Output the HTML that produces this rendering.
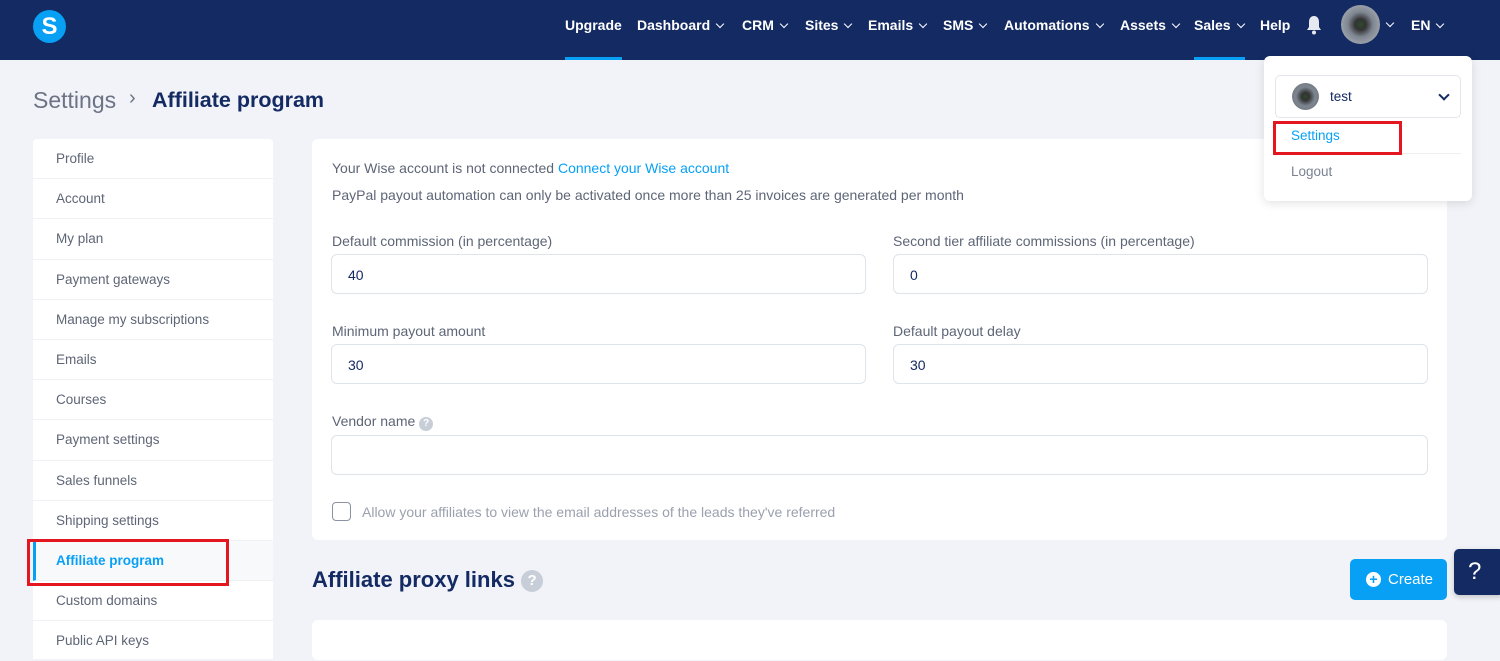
<!DOCTYPE html>
<html><head><meta charset="utf-8"><style>
*{box-sizing:border-box;margin:0;padding:0}
body{width:1500px;height:647px;overflow:hidden;background:#f1f3f8;font-family:"Liberation Sans",sans-serif;color:#5d6576;position:relative}
.nav{position:absolute;left:0;top:0;width:1500px;height:60px;background:#142a63}
.logo{position:absolute;left:33px;top:10px;width:33px;height:33px;border-radius:50%;background:#07a0f5;color:#fff;font-weight:bold;font-size:24px;text-align:center;line-height:33px}
.ni{position:absolute;top:17px;color:#fff;font-weight:bold;font-size:14px}
.ch{display:inline-block;width:6px;height:6px;border-right:1.3px solid #fff;border-bottom:1.3px solid #fff;transform:rotate(45deg);margin-left:7px;position:relative;top:-3px}
.ul{position:absolute;top:57px;height:3px;background:#07a0f5}
.side{position:absolute;left:33px;top:139px;width:240px;background:#fff;border-radius:4px 4px 0 0;height:520px}
.si{height:40.2px;line-height:40px;padding-left:23px;font-size:13.5px;border-bottom:1px solid #f0f1f4;color:#5d6576}
.card{position:absolute;left:312px;top:139px;width:1135px;height:401px;background:#fff;border-radius:6px}
.t{position:absolute;font-size:14px}
.inp{position:absolute;height:40px;border:1px solid #dfe3ea;border-radius:6px;font-size:14px;color:#142a63;padding:12px 16px}
.red{position:absolute;border:3px solid #e4161f}
</style></head><body>
<div class="nav">
<div class="logo">S</div>
<span class="ni" style="left:565px">Upgrade</span>
<span class="ni" style="left:637px">Dashboard<i class="ch"></i></span>
<span class="ni" style="left:742px">CRM<i class="ch"></i></span>
<span class="ni" style="left:805px">Sites<i class="ch"></i></span>
<span class="ni" style="left:868px">Emails<i class="ch"></i></span>
<span class="ni" style="left:943px">SMS<i class="ch"></i></span>
<span class="ni" style="left:1004px">Automations<i class="ch"></i></span>
<span class="ni" style="left:1120px">Assets<i class="ch"></i></span>
<span class="ni" style="left:1194px">Sales<i class="ch"></i></span>
<span class="ni" style="left:1260px">Help</span>
<svg style="position:absolute;left:1305px;top:15px" width="18" height="20" viewBox="0 0 18 20"><path d="M9 1C5.5 1 4 4 4 7v5l-2 3h14l-2-3V7c0-3-1.5-6-5-6z" fill="#e6e9f0"/><circle cx="9" cy="17.5" r="2" fill="#e6e9f0"/></svg>
<div style="position:absolute;left:1341px;top:5px;width:39px;height:39px;border-radius:50%;background:radial-gradient(circle,#2c4a2c 0,#333 20%,#7d8590 45%,#9aa0a8 70%,#6d727a 100%)"></div>
<i class="ch" style="position:absolute;left:1380px;top:20px"></i>
<span class="ni" style="left:1411px">EN<i class="ch"></i></span>
<div class="ul" style="left:565px;width:57px"></div>
<div class="ul" style="left:1194px;width:51px"></div>
</div>
<div style="position:absolute;left:33px;top:87px;font-size:23px;color:#6b7385">Settings</div>
<div style="position:absolute;left:129px;top:87px;font-size:20px;color:#6b7385">&#8250;</div>
<div style="position:absolute;left:152px;top:88px;font-size:21.5px;font-weight:bold;color:#142a63">Affiliate program</div>
<div class="side">
<div class="si">Profile</div><div class="si">Account</div><div class="si">My plan</div><div class="si">Payment gateways</div><div class="si">Manage my subscriptions</div><div class="si">Emails</div><div class="si">Courses</div><div class="si">Payment settings</div><div class="si">Sales funnels</div><div class="si">Shipping settings</div>
<div class="si" style="background:#f8f9fb;border-left:3px solid #07a0f5;padding-left:20px;color:#07a0f5;font-weight:bold">Affiliate program</div>
<div class="si">Custom domains</div><div class="si">Public API keys</div>
</div>
<div class="red" style="left:27px;top:539px;width:202px;height:47px"></div>
<div class="card">
<div class="t" style="left:20px;top:21px">Your Wise account is not connected <span style="color:#07a0f5">Connect your Wise account</span></div>
<div class="t" style="left:20px;top:48px">PayPal payout automation can only be activated once more than 25 invoices are generated per month</div>
<div class="t" style="left:20px;top:94px">Default commission (in percentage)</div>
<div class="t" style="left:581px;top:94px">Second tier affiliate commissions (in percentage)</div>
<div class="inp" style="left:19px;top:115px;width:535px">40</div>
<div class="inp" style="left:581px;top:115px;width:535px">0</div>
<div class="t" style="left:20px;top:184px">Minimum payout amount</div>
<div class="t" style="left:581px;top:184px">Default payout delay</div>
<div class="inp" style="left:19px;top:205px;width:535px">30</div>
<div class="inp" style="left:581px;top:205px;width:535px">30</div>
<div class="t" style="left:20px;top:274px">Vendor name <span style="display:inline-block;width:14px;height:14px;border-radius:50%;background:#c8ced8;color:#fff;font-size:10px;text-align:center;line-height:14px;font-weight:bold">?</span></div>
<div class="inp" style="left:19px;top:296px;width:1097px"></div>
<div style="position:absolute;left:20px;top:363px;width:19px;height:19px;border:1.5px solid #8a93a3;border-radius:4px"></div>
<div class="t" style="left:50px;top:365px;color:#9aa1ad">Allow your affiliates to view the email addresses of the leads they've referred</div>
</div>
<div style="position:absolute;left:312px;top:567px;font-size:22px;font-weight:bold;color:#142a63">Affiliate proxy links <span style="display:inline-block;width:22px;height:22px;border-radius:50%;background:#c8ced8;color:#fff;font-size:15px;text-align:center;line-height:22px;vertical-align:2px">?</span></div>
<div style="position:absolute;left:1350px;top:559px;width:97px;height:41px;background:#07a0f5;border-radius:5px;color:#fff;font-size:15px;line-height:41px;padding-left:38px">Create</div>
<div style="position:absolute;left:1366px;top:572px;width:15px;height:15px;border-radius:50%;background:#fff;color:#07a0f5;font-weight:bold;font-size:14px;text-align:center;line-height:15px">+</div>
<div style="position:absolute;left:1454px;top:549px;width:50px;height:46px;background:#142a63;border-radius:5px;color:#fff;font-size:24px;padding-left:14px;line-height:46px;box-shadow:0 2px 6px rgba(0,0,0,.2)">?</div>
<div style="position:absolute;left:312px;top:620px;width:1135px;height:40px;background:#fff;border-radius:6px"></div>
<div style="position:absolute;left:1264px;top:56px;width:208px;height:145px;background:#fff;border-radius:6px;box-shadow:0 2px 10px rgba(0,0,0,.12)">
<div style="position:absolute;left:11px;top:19px;width:186px;height:43px;border:1px solid #e3e6ec;border-radius:5px">
<div style="position:absolute;left:16px;top:7px;width:27px;height:27px;border-radius:50%;background:radial-gradient(circle,#2c4a2c 0,#333 20%,#7d8590 50%,#6d727a 100%)"></div>
<span style="position:absolute;left:54px;top:13px;font-size:13.5px;color:#142a63">test</span>
<i class="ch" style="position:absolute;left:157px;top:15px;border-color:#142a63;border-width:2px;width:8px;height:8px"></i>
</div>
<div style="position:absolute;left:27px;top:72px;font-size:13.5px;color:#07a0f5">Settings</div>
<div style="position:absolute;left:11px;top:97px;width:186px;height:1px;background:#eceef2"></div>
<div style="position:absolute;left:27px;top:108px;font-size:13.5px;color:#7a8292">Logout</div>
</div>
<div class="red" style="left:1273px;top:121px;width:129px;height:34px"></div>
</body></html>
